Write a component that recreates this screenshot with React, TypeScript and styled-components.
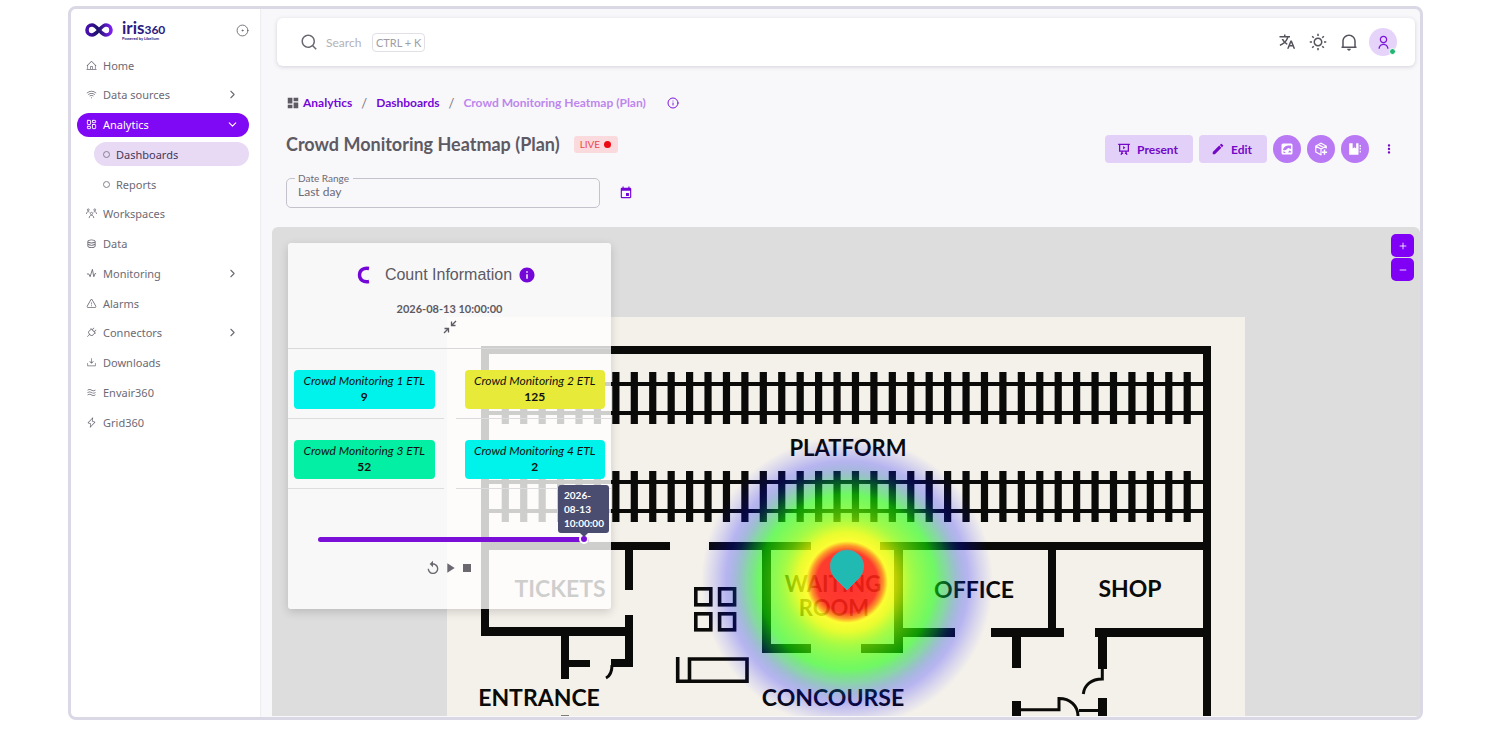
import React from "react";
import styled, { createGlobalStyle, css } from "styled-components";
import {
  RiTranslate2,
  RiSunLine,
  RiNotification2Line,
  RiUserLine,
  RiSearchLine,
  RiDatabase2Line,
} from "react-icons/ri";
import { MdDashboard, MdEdit, MdEvent, MdInfo, MdMoreVert, MdReplay, MdPlayArrow, MdStop } from "react-icons/md";
import { PiPlug, PiWaves, PiLightning, PiDownloadSimple, PiWarning, PiHouseLine, PiWifiHigh } from "react-icons/pi";
import { LuChevronRight, LuChevronDown, LuCircleDot, LuInfo, LuLayoutDashboard, LuPlus, LuMinus } from "react-icons/lu";

const GlobalStyle = createGlobalStyle`
  *, *::before, *::after { box-sizing: border-box; }
  body {
    margin: 0;
    background: #ffffff;
    font-family: Lato, "Noto Sans", sans-serif;
    color: #5d5a63;
  }
  ul, ol { list-style: none; margin: 0; padding: 0; }
  a { text-decoration: none; color: inherit; }
  button, input { font: inherit; }
  svg { display: block; flex-shrink: 0; }
`;

const Page = styled.div`
  min-height: 100vh;
  display: flex;
  padding: 6px 77px 10px 68px;
`;

const Frame = styled.div`
  flex: 1;
  min-width: 0;
  display: flex;
  border: 3px solid #dad8e4;
  border-radius: 8px;
  background: #f8f7fa;
  overflow: hidden;
`;

/* Sidebar */

const Sidebar = styled.aside`
  width: 189px;
  flex-shrink: 0;
  padding: 9px 11px 0 6px;
  background: #ffffff;
  box-shadow: 0 0 2px #dcdae4;
`;

const Brand = styled.div`
  display: flex;
  align-items: center;
  height: 24px;
  padding: 0 0 0 8px;
  margin-bottom: 11px;
`;

const BrandText = styled.div`
  margin-left: 9px;
  flex: 1;
  display: flex;
  flex-direction: column;
  color: #2a1a80;
`;

const BrandName = styled.span`
  font-size: 17px;
  line-height: 15px;
  font-weight: 700;
`;

const BrandNumber = styled.span`
  font-size: 12px;
`;

const BrandTagline = styled.span`
  font-size: 4px;
  line-height: 4px;
  font-weight: 700;
`;

const PlainButton = styled.button`
  display: inline-flex;
  align-items: center;
  justify-content: center;
  border: 0;
  padding: 0;
  background: none;
  color: inherit;
  cursor: pointer;
`;

const NavList = styled.ul`
  display: flex;
  flex-direction: column;
  justify-content: space-between;
  min-height: 381px;
`;

const NavLink = styled.a<{ $active?: boolean }>`
  display: flex;
  align-items: center;
  gap: 6px;
  height: 24px;
  padding: 0 10px 0 9px;
  border-radius: 12px;
  font-family: "Noto Sans", sans-serif;
  font-size: 11px;
  color: #6d6a75;
  ${(p) =>
    p.$active &&
    css`
      background: #8009f5;
      color: #ffffff;
    `}
`;

const SubLink = styled(NavLink)<{ $current?: boolean }>`
  margin-left: 17px;
  padding-left: 9px;
  ${(p) =>
    p.$current &&
    css`
      background: #e8daf5;
      color: #453858;
    `}
`;

const NavLabel = styled.span`
  flex: 1;
`;

const Ring = styled.span`
  width: 7px;
  height: 7px;
  border: 1px solid #85808f;
  border-radius: 50%;
`;

/* Main column */

const Main = styled.main`
  flex: 1;
  min-width: 0;
  display: flex;
  flex-direction: column;
  padding: 9px 0 1px 12px;
`;

const TopBar = styled.header`
  display: flex;
  align-items: center;
  height: 48px;
  margin: 0 5px 0 5px;
  padding: 0 18px 0 23px;
  border-radius: 6px;
  background: #ffffff;
  box-shadow: 0 1px 4px rgba(60, 50, 80, 0.18);
`;

const SearchLabel = styled.label`
  display: flex;
  align-items: center;
  gap: 8px;
  flex: 1;
  color: #6a6770;
`;

const SearchInput = styled.input`
  width: 38px;
  border: 0;
  padding: 0;
  outline: 0;
  background: none;
  font-size: 12px;
  &::placeholder {
    color: #b3b1b8;
    opacity: 1;
  }
`;

const Shortcut = styled.kbd`
  border: 1px solid #e2e0e6;
  border-radius: 4px;
  padding: 0 3px;
  font-family: inherit;
  font-size: 11px;
  line-height: 17px;
  color: #a09da6;
`;

const TopActions = styled.div`
  display: flex;
  align-items: center;
  gap: 13px;
  color: #56535c;
`;

const Avatar = styled(PlainButton)`
  position: relative;
  width: 28px;
  height: 28px;
  margin-left: -2px;
  border-radius: 50%;
  background: #e6d3fa;
  color: #7d16dc;
`;

const OnlineDot = styled.span`
  position: absolute;
  right: 1px;
  bottom: 1px;
  width: 7px;
  height: 7px;
  border: 1px solid #ffffff;
  border-radius: 50%;
  background: #22b573;
`;

const Breadcrumbs = styled.ol`
  display: flex;
  align-items: center;
  height: 16px;
  margin: 29px 0 20px 14px;
  font-size: 12px;
  line-height: 16px;
  font-weight: 700;
  color: #6d6a75;
`;

const Crumb = styled.li`
  display: flex;
  align-items: center;
  gap: 3px;
  color: #7407d8;
  & + &::before {
    content: "/";
    margin: 0 6px 0 9px;
    color: #77747e;
    font-weight: 400;
    font-size: 13px;
  }
  svg {
    color: #5d5a63;
  }
`;

const CurrentCrumb = styled.span`
  color: #bd86ee;
`;

const InfoItem = styled.li`
  display: flex;
  margin-left: 21px;
`;

const InfoButton = styled(PlainButton)`
  color: #7d16dc;
`;

const Heading = styled.section`
  display: flex;
  justify-content: space-between;
  align-items: flex-start;
  padding: 0 17px 19px 14px;
`;

const HeadingLeft = styled.div`
  display: flex;
  flex-direction: column;
  gap: 15px;
`;

const TitleRow = styled.div`
  display: flex;
  align-items: center;
  gap: 14px;
  height: 26px;
`;

const Title = styled.h1`
  margin: 0;
  font-size: 18px;
  line-height: 24px;
  font-weight: 700;
`;

const LiveBadge = styled.span`
  display: flex;
  align-items: center;
  gap: 4px;
  height: 17px;
  padding: 0 7px 0 6px;
  border-radius: 3px;
  background: #fadadd;
  color: #ea4a52;
  font-size: 10px;
`;

const LiveDot = styled.span`
  width: 7px;
  height: 7px;
  border-radius: 50%;
  background: #ee0a12;
`;

const FieldRow = styled.div`
  display: flex;
  align-items: center;
  gap: 19px;
`;

const Fieldset = styled.fieldset`
  width: 314px;
  height: 36px;
  margin: 0;
  padding: 0 8px;
  border: 1px solid #c4c2ca;
  border-radius: 5px;
`;

const Legend = styled.legend`
  padding: 0 4px 0 3px;
  font-size: 10px;
  line-height: 12px;
  color: #6d6a75;
`;

const FieldInput = styled.input`
  display: block;
  width: 100%;
  height: 16px;
  border: 0;
  padding: 0 3px;
  outline: 0;
  background: none;
  font-size: 12px;
  line-height: 16px;
  color: #6d6a75;
`;

const CalendarButton = styled(PlainButton)`
  margin-top: 5px;
  color: #7407d8;
`;

const Actions = styled.div`
  display: flex;
  align-items: center;
  gap: 6px;
  margin-top: 4px;
`;

const ActionButton = styled.button`
  display: flex;
  align-items: center;
  gap: 6px;
  height: 28px;
  padding: 0 15px 0 12px;
  border: 0;
  border-radius: 4px;
  background: #e3d0f8;
  color: #7407c8;
  font-size: 12px;
  font-weight: 700;
  cursor: pointer;
`;

const RoundButton = styled(PlainButton)`
  width: 28px;
  height: 28px;
  border-radius: 50%;
  background: #b978f4;
  color: #ffffff;
`;

const MoreButton = styled(PlainButton)`
  width: 28px;
  height: 28px;
  color: #7407c8;
`;

/* Map */

const MapArea = styled.section`
  position: relative;
  flex: 1;
  min-height: 489px;
  display: flex;
  justify-content: center;
  padding-top: 90px;
  overflow: hidden;
  border-radius: 6px 6px 0 0;
  background: #dddddd;
`;

const PlanDrawing = styled.svg`
  width: 798px;
  height: 399px;
  font-family: Lato, sans-serif;
  font-size: 23px;
  font-weight: 700;
`;

const ZoomControls = styled.div`
  position: absolute;
  top: 7px;
  right: 6px;
  display: flex;
  flex-direction: column;
  gap: 1px;
`;

const ZoomButton = styled(PlainButton)`
  width: 23px;
  height: 23px;
  border-radius: 5px;
  background: #7f00f5;
  color: #ffffff;
`;

const CountPanel = styled.section`
  position: absolute;
  top: 16px;
  left: 16px;
  width: 323px;
  height: 366px;
  border-radius: 3px;
  background: rgba(255, 255, 255, 0.8);
  box-shadow: 0 3px 10px rgba(0, 0, 0, 0.16);
`;

const PanelHeader = styled.header`
  display: flex;
  flex-direction: column;
  align-items: center;
  height: 106px;
  padding-top: 21px;
  border-bottom: 1px solid #d9d9dc;
`;

const PanelTitle = styled.div`
  display: flex;
  align-items: center;
  height: 22px;
  padding-right: 6px;
  color: #7407d8;
`;

const PanelName = styled.h2`
  margin: 0 6px 0 15px;
  font-family: "Liberation Sans", Arial, sans-serif;
  font-size: 16px;
  font-weight: 400;
  color: #5d5a63;
`;

const PanelDate = styled.time`
  margin: 15px 0 3px;
  font-size: 11px;
  line-height: 16px;
  font-weight: 700;
`;

const Counts = styled.ul`
  display: grid;
  grid-template-columns: 1fr 1fr;
  column-gap: 12px;
`;

const CountCell = styled.li`
  height: 70px;
  padding: 21px 6px 0 6px;
  border-bottom: 1px solid #dcdcde;
  &:nth-child(odd) {
    padding-right: 9px;
  }
  &:nth-child(even) {
    padding-left: 9px;
  }
`;

const CountChip = styled.div<{ $tone: string }>`
  height: 39px;
  padding-top: 3px;
  border-radius: 4px;
  background: ${(p) => p.$tone};
  text-align: center;
  font-size: 12px;
  line-height: 16px;
  color: #111111;
`;

const ChipName = styled.em`
  display: block;
  white-space: nowrap;
`;

const SliderBox = styled.div`
  position: relative;
  margin: 44px 22px 0 30px;
  height: 12px;
`;

const Slider = styled.input`
  appearance: none;
  display: block;
  width: 100%;
  height: 12px;
  margin: 0;
  background: none;
  &::-webkit-slider-runnable-track {
    height: 5px;
    border-radius: 3px;
    background: #7a10d8;
  }
  &::-webkit-slider-thumb {
    appearance: none;
    width: 10px;
    height: 10px;
    margin-top: -3px;
    border: 2px solid #ffffff;
    border-radius: 50%;
    background: #7a10d8;
  }
`;

const Tooltip = styled.output`
  position: absolute;
  right: -20px;
  bottom: 12px;
  width: 51px;
  padding: 3px 6px;
  border-radius: 3px;
  background: #4b4d70;
  color: #ffffff;
  font-size: 10px;
  line-height: 14px;
  font-weight: 700;
  &::after {
    content: "";
    position: absolute;
    top: 100%;
    left: 22px;
    border: 4px solid transparent;
    border-top-color: #4b4d70;
  }
`;

const Playback = styled.div`
  display: flex;
  justify-content: center;
  align-items: center;
  gap: 1px;
  margin-top: 15px;
  height: 16px;
  color: #6b6870;
`;

/* Icons drawn by hand */

const InfinityMark = () => (
  <svg width="28" height="18" viewBox="0 0 28 18" fill="none" aria-hidden="true">
    <defs>
      <linearGradient id="mark" x1="0" y1="0" x2="1" y2="0">
        <stop offset="0" stopColor="#4a0fb0" />
        <stop offset="0.45" stopColor="#1c1268" />
        <stop offset="1" stopColor="#7c1ff0" />
      </linearGradient>
    </defs>
    <path
      d="M14 9C11 5.500 9.500 4 7 4a5 5 0 0 0 0 10c2.500 0 4-1.500 7-5s4.500-5 7-5a5 5 0 0 1 0 10c-2.500 0-4-1.500-7-5z"
      stroke="url(#mark)"
      strokeWidth="3.600"
    />
  </svg>
);

const TeamIcon = () => (
  <svg width="11" height="11" viewBox="0 0 24 24" fill="none" stroke="currentColor" strokeWidth="1.800" aria-hidden="true">
    <circle cx="12" cy="12" r="2.500" />
    <path d="M7 22c0-4 2-6 5-6s5 2 5 6" />
    <circle cx="5" cy="4" r="2" />
    <circle cx="19" cy="4" r="2" />
    <path d="M1 13c0-3 1.500-5 4-5 1 0 2 .4 2.500 1M23 13c0-3-1.500-5-4-5-1 0-2 .4-2.500 1" />
  </svg>
);

const PulseIcon = () => (
  <svg width="11" height="11" viewBox="0 0 24 24" fill="none" stroke="currentColor" strokeWidth="2" aria-hidden="true">
    <path d="M2 13h4l3 6 5-16 3 16 3-7h2" />
  </svg>
);

const PresentIcon = () => (
  <svg width="14" height="14" viewBox="0 0 24 24" fill="none" stroke="currentColor" strokeWidth="2.200" aria-hidden="true">
    <path d="M2 4h20M4.500 4v11.500h15V4M9 16l-2 6M15 16l2 6M7.500 19.500h3M13.500 19.500h3" />
    <path d="M10.500 7v5.500l4-2.700z" fill="currentColor" stroke="none" />
  </svg>
);

const ShareMapIcon = () => (
  <svg width="12" height="12" viewBox="0 0 24 24" aria-hidden="true">
    <rect x="1" y="1" width="22" height="22" rx="3" fill="currentColor" />
    <path d="M4 13c2-5 6-8 11-8h5v6c-2 2-3 0-4-1-3 0-4 3-7 4-2 1-4 1-5-1z" fill="#b978f4" />
    <path d="M5 16l5 4H6a1 1 0 0 1-1-1zM14 19l3-4 3 2v2z" fill="#b978f4" />
  </svg>
);

const CubePlusIcon = () => (
  <svg width="14" height="14" viewBox="0 0 24 24" fill="none" stroke="currentColor" strokeWidth="2" aria-hidden="true">
    <path d="M21 11V7l-9-5-9 5v10l9 5 1-.5M3 7l9 5 9-5M12 12v10M7.500 4.500l9 5" />
    <path d="M18 13v9M13.500 17.500h9" strokeWidth="2.600" />
  </svg>
);

const NotebookIcon = () => (
  <svg width="14" height="14" viewBox="0 0 24 24" fill="currentColor" aria-hidden="true">
    <path d="M3 2h5v9l3-2 3 2V2h4v20H3a1 1 0 0 1-1-1V3a1 1 0 0 1 1-1z" />
    <path d="M20 5h2v3h-2zM20 10h2v3h-2zM20 15h2v3h-2z" />
  </svg>
);

const CollapseIcon = () => (
  <svg width="14" height="14" viewBox="0 0 14 14" fill="none" stroke="currentColor" strokeWidth="1.300" aria-hidden="true">
    <path d="M13 1L9 5M8.500 1.500v4h4M1 13l4-4M1.500 8.500h4v4" />
  </svg>
);

const LoaderArc = () => (
  <svg width="13" height="18" viewBox="0 0 13 18" fill="none" aria-hidden="true">
    <path d="M12 2.500C6 1.500 2.500 4.500 2.500 9S6 16.500 12 15.500" stroke="currentColor" strokeWidth="3.400" />
  </svg>
);

/* Station floor plan */

const INK = "#0a0a08";

const walls: [number, number, number, number][] = [
  [481, 346, 730, 8],
  [481, 346, 8, 290],
  [1203, 346, 8, 371],
  [481, 542, 189, 8],
  [709, 542, 102, 8],
  [880, 542, 323, 8],
  [625, 550, 8, 40],
  [625, 615, 8, 52],
  [481, 627, 152, 9],
  [611, 659, 22, 8],
  [561, 635, 8, 44],
  [569, 660, 21, 7],
  [762, 542, 9, 111],
  [762, 644, 49, 9],
  [861, 644, 42, 9],
  [894, 550, 9, 103],
  [903, 628, 52, 9],
  [1048, 550, 8, 87],
  [991, 628, 73, 9],
  [1012, 637, 9, 31],
  [1095, 628, 108, 9],
  [1098, 637, 9, 32],
  [1012, 701, 9, 16],
  [1098, 698, 9, 19],
];

const tracks = [
  { top: 372, height: 52, rails: [382, 411] },
  { top: 471, height: 51, rails: [480, 509] },
];

const rooms: { name: string; x: number; y: number; size?: number }[] = [
  { name: "PLATFORM", x: 848, y: 456, size: 22 },
  { name: "TICKETS", x: 560, y: 597 },
  { name: "ENTRANCE", x: 539, y: 706 },
  { name: "CONCOURSE", x: 833, y: 706 },
  { name: "OFFICE", x: 974, y: 598 },
  { name: "SHOP", x: 1130, y: 597 },
  { name: "WAITING", x: 833, y: 592, size: 22 },
  { name: "ROOM", x: 834, y: 616, size: 22 },
];

const FloorPlan = () => (
  <PlanDrawing viewBox="447 317 798 399" role="img" aria-label="Station floor plan with crowd heatmap">
    <defs>
      <radialGradient id="heat" gradientUnits="userSpaceOnUse" cx="847" cy="582" r="146">
        <stop offset="0" stopColor="#ff1c1c" stopOpacity="0.9" />
        <stop offset="0.21" stopColor="#ff2414" stopOpacity="0.88" />
        <stop offset="0.25" stopColor="#ff8c0a" stopOpacity="0.86" />
        <stop offset="0.28" stopColor="#ffff10" stopOpacity="0.84" />
        <stop offset="0.34" stopColor="#e6ff00" stopOpacity="0.8" />
        <stop offset="0.44" stopColor="#80ff00" stopOpacity="0.7" />
        <stop offset="0.6" stopColor="#10ff00" stopOpacity="0.58" />
        <stop offset="0.69" stopColor="#00b450" stopOpacity="0.44" />
        <stop offset="0.77" stopColor="#0040c0" stopOpacity="0.32" />
        <stop offset="0.83" stopColor="#0000ff" stopOpacity="0.25" />
        <stop offset="0.92" stopColor="#0000ff" stopOpacity="0.11" />
        <stop offset="1" stopColor="#0000ff" stopOpacity="0" />
      </radialGradient>
    </defs>
    <rect x="447" y="317" width="798" height="400" fill="#f4f1eb" />
    <g fill={INK}>
      {walls.map(([x, y, w, h]) => (
        <rect key={`${x}-${y}-${w}`} x={x} y={y} width={w} height={h} />
      ))}
      {tracks.map((track) => (
        <g key={track.top}>
          {track.rails.map((y) => (
            <rect key={y} x="489" y={y} width="714" height="4" />
          ))}
          {Array.from({ length: 38 }, (_, i) => (
            <rect key={i} x={501.7 + i * 18.43} y={track.top} width="7.200" height={track.height} />
          ))}
        </g>
      ))}
      {rooms.map((room) => (
        <text key={room.name} x={room.x} y={room.y} fontSize={room.size} textAnchor="middle">
          {room.name}
        </text>
      ))}
      <rect x="561" y="715" width="8" height="2" opacity="0.500" />
    </g>
    <g fill="none" stroke={INK} strokeWidth="3.600">
      <rect x="695.800" y="588.800" width="15" height="16" />
      <rect x="719.600" y="588.800" width="15" height="16" />
      <rect x="695.800" y="613.800" width="15" height="16" />
      <rect x="719.600" y="613.800" width="15" height="16" />
      <path d="M677.700 657v24.300H747V659h-57.500v22" />
      <path d="M612 665c0 6-2 11-6 13" strokeWidth="3" />
      <path d="M1102.300 669v10c-11 0-18 6-19 15" strokeWidth="3" />
      <path d="M1021 709.800h38V698.500c11 0 19 7 19 18M1079 710.500h19" strokeWidth="3" />
    </g>
    <circle cx="847" cy="582" r="146" fill="url(#heat)" />
    <path
      d="M847 590l-12.500-12.500a16.600 16.600 0 1 1 25 0z"
      fill="#20bab2"
      stroke="#5f9ea0"
      strokeWidth="1"
    />
  </PlanDrawing>
);

/* Data */

const iconSize = 11;

type NavEntry = { label: string; icon?: React.ReactNode; more?: boolean; active?: boolean; sub?: boolean; current?: boolean };

const navigation: NavEntry[] = [
  { label: "Home", icon: <PiHouseLine size={iconSize} /> },
  { label: "Data sources", icon: <PiWifiHigh size={iconSize} />, more: true },
  { label: "Analytics", icon: <LuLayoutDashboard size={iconSize} />, active: true },
  { label: "Dashboards", sub: true, current: true },
  { label: "Reports", sub: true },
  { label: "Workspaces", icon: <TeamIcon /> },
  { label: "Data", icon: <RiDatabase2Line size={iconSize} /> },
  { label: "Monitoring", icon: <PulseIcon />, more: true },
  { label: "Alarms", icon: <PiWarning size={iconSize} /> },
  { label: "Connectors", icon: <PiPlug size={iconSize} />, more: true },
  { label: "Downloads", icon: <PiDownloadSimple size={iconSize} /> },
  { label: "Envair360", icon: <PiWaves size={iconSize} /> },
  { label: "Grid360", icon: <PiLightning size={iconSize} /> },
];

const counts = [
  { name: "Crowd Monitoring 1 ETL", value: 9, tone: "#00f3ea" },
  { name: "Crowd Monitoring 2 ETL", value: 125, tone: "#e8ea3a" },
  { name: "Crowd Monitoring 3 ETL", value: 52, tone: "#02efa4" },
  { name: "Crowd Monitoring 4 ETL", value: 2, tone: "#00f3ea" },
];

export default function App() {
  return (
    <>
      <GlobalStyle />
      <Page>
        <Frame>
          <Sidebar>
            <Brand>
              <InfinityMark />
              <BrandText>
                <BrandName>
                  iris<BrandNumber>360</BrandNumber>
                </BrandName>
                <BrandTagline>Powered by Libelium</BrandTagline>
              </BrandText>
              <PlainButton aria-label="Pin menu">
                <LuCircleDot size={13} strokeWidth={1.5} />
              </PlainButton>
            </Brand>
            <nav>
              <NavList>
                {navigation.map((item) => (
                  <li key={item.label}>
                    {item.sub ? (
                      <SubLink href="#" $current={item.current}>
                        <Ring />
                        <NavLabel>{item.label}</NavLabel>
                      </SubLink>
                    ) : (
                      <NavLink href="#" $active={item.active}>
                        {item.icon}
                        <NavLabel>{item.label}</NavLabel>
                        {item.more && <LuChevronRight size={13} />}
                        {item.active && <LuChevronDown size={13} />}
                      </NavLink>
                    )}
                  </li>
                ))}
              </NavList>
            </nav>
          </Sidebar>
          <Main>
            <TopBar>
              <SearchLabel>
                <RiSearchLine size={18} />
                <SearchInput type="text" placeholder="Search" aria-label="Search" />
                <Shortcut>CTRL + K</Shortcut>
              </SearchLabel>
              <TopActions>
                <PlainButton aria-label="Language">
                  <RiTranslate2 size={18} />
                </PlainButton>
                <PlainButton aria-label="Theme">
                  <RiSunLine size={18} />
                </PlainButton>
                <PlainButton aria-label="Notifications">
                  <RiNotification2Line size={18} />
                </PlainButton>
                <Avatar aria-label="Account">
                  <RiUserLine size={15} />
                  <OnlineDot />
                </Avatar>
              </TopActions>
            </TopBar>
            <Breadcrumbs>
              <Crumb>
                <MdDashboard size={14} />
                <a href="#">Analytics</a>
              </Crumb>
              <Crumb>
                <a href="#">Dashboards</a>
              </Crumb>
              <Crumb>
                <CurrentCrumb>Crowd Monitoring Heatmap (Plan)</CurrentCrumb>
              </Crumb>
              <InfoItem>
                <InfoButton aria-label="About this dashboard">
                  <LuInfo size={12} />
                </InfoButton>
              </InfoItem>
            </Breadcrumbs>
            <Heading>
              <HeadingLeft>
                <TitleRow>
                  <Title>Crowd Monitoring Heatmap (Plan)</Title>
                  <LiveBadge>
                    LIVE
                    <LiveDot />
                  </LiveBadge>
                </TitleRow>
                <FieldRow>
                  <Fieldset>
                    <Legend>
                      <label htmlFor="range">Date Range</label>
                    </Legend>
                    <FieldInput id="range" readOnly value="Last day" />
                  </Fieldset>
                  <CalendarButton aria-label="Pick dates">
                    <MdEvent size={14} />
                  </CalendarButton>
                </FieldRow>
              </HeadingLeft>
              <Actions>
                <ActionButton>
                  <PresentIcon />
                  Present
                </ActionButton>
                <ActionButton>
                  <MdEdit size={14} />
                  Edit
                </ActionButton>
                <RoundButton aria-label="Share">
                  <ShareMapIcon />
                </RoundButton>
                <RoundButton aria-label="Add package">
                  <CubePlusIcon />
                </RoundButton>
                <RoundButton aria-label="Notebook">
                  <NotebookIcon />
                </RoundButton>
                <MoreButton aria-label="More">
                  <MdMoreVert size={14} />
                </MoreButton>
              </Actions>
            </Heading>
            <MapArea>
              <FloorPlan />
              <CountPanel>
                <PanelHeader>
                  <PanelTitle>
                    <LoaderArc />
                    <PanelName>Count Information</PanelName>
                    <MdInfo size={18} />
                  </PanelTitle>
                  <PanelDate>2026-08-13 10:00:00</PanelDate>
                  <PlainButton aria-label="Collapse">
                    <CollapseIcon />
                  </PlainButton>
                </PanelHeader>
                <Counts>
                  {counts.map((item) => (
                    <CountCell key={item.name}>
                      <CountChip $tone={item.tone}>
                        <ChipName>{item.name}</ChipName>
                        <strong>{item.value}</strong>
                      </CountChip>
                    </CountCell>
                  ))}
                </Counts>
                <SliderBox>
                  <Slider id="moment" type="range" min={0} max={24} defaultValue={24} aria-label="Time" />
                  <Tooltip htmlFor="moment">2026-08-13 10:00:00</Tooltip>
                </SliderBox>
                <Playback>
                  <PlainButton aria-label="Restart">
                    <MdReplay size={16} />
                  </PlainButton>
                  <PlainButton aria-label="Play">
                    <MdPlayArrow size={16} />
                  </PlainButton>
                  <PlainButton aria-label="Stop">
                    <MdStop size={16} />
                  </PlainButton>
                </Playback>
              </CountPanel>
              <ZoomControls>
                <ZoomButton aria-label="Zoom in">
                  <LuPlus size={10} />
                </ZoomButton>
                <ZoomButton aria-label="Zoom out">
                  <LuMinus size={10} />
                </ZoomButton>
              </ZoomControls>
            </MapArea>
          </Main>
        </Frame>
      </Page>
    </>
  );
}
